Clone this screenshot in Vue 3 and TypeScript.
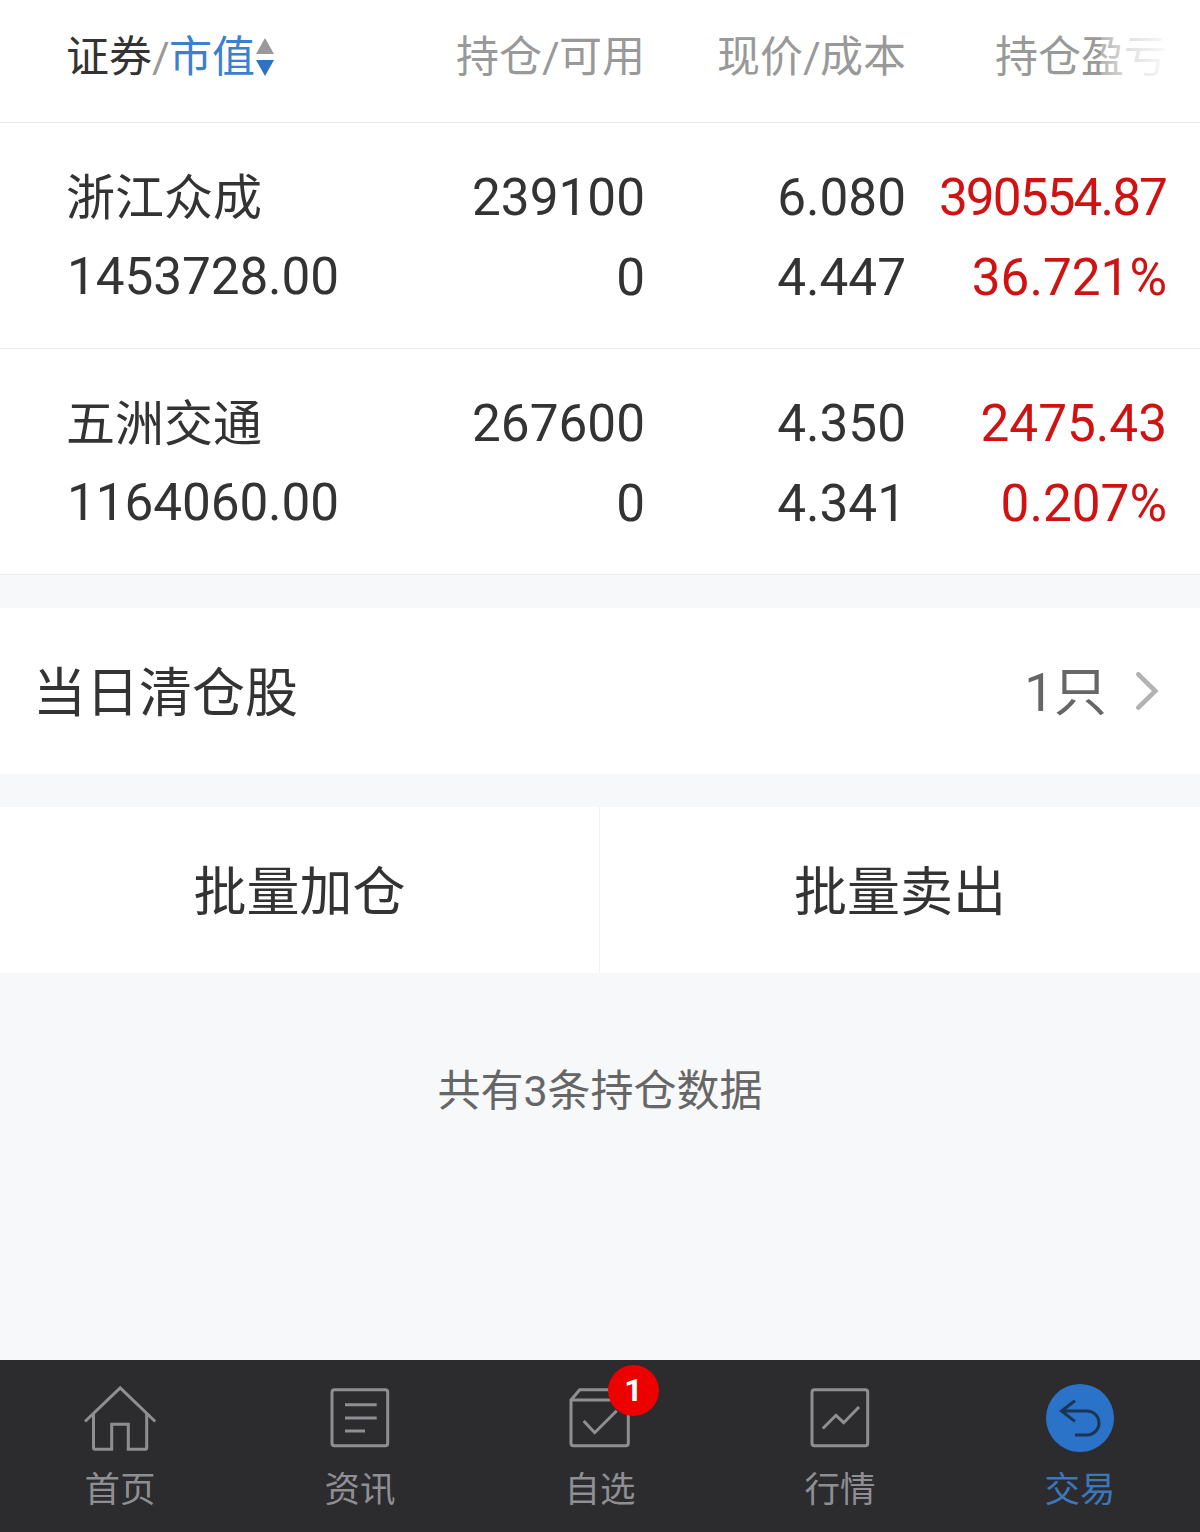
<script setup lang="ts">
interface Holding {
  name: string
  value: string
  amount: string
  available: string
  price: string
  cost: string
  profit: string
  rate: string
}

const holdings: Holding[] = [
  { name: '浙江众成', value: '1453728.00', amount: '239100', available: '0', price: '6.080', cost: '4.447', profit: '390554.87', rate: '36.721%' },
  { name: '五洲交通', value: '1164060.00', amount: '267600', available: '0', price: '4.350', cost: '4.341', profit: '2475.43', rate: '0.207%' },
]

interface Tab {
  id: string
  label: string
  badge?: number
}

const activeTab = 'trade'
const tabs: Tab[] = [
  { id: 'home', label: '首页' },
  { id: 'news', label: '资讯' },
  { id: 'watch', label: '自选', badge: 1 },
  { id: 'market', label: '行情' },
  { id: 'trade', label: '交易' },
]
</script>

<template>
  <div class="page">
    <header class="row head">
      <div class="sort">
        <span class="dark">证券</span><span class="slash">/</span><span class="blue">市值</span>
        <svg class="sorter" width="18" height="38" viewBox="0 0 18 38">
          <path d="M9 0L18 16H0Z" fill="#999" />
          <path d="M0 22H18L9 38Z" fill="#2f72c4" />
        </svg>
      </div>
      <div class="right">持仓<span class="slash">/</span>可用</div>
      <div class="right">现价<span class="slash">/</span>成本</div>
      <div class="right last">持仓盈亏<i class="fade"></i></div>
    </header>

    <section v-for="h in holdings" :key="h.name" class="row holding">
      <div class="cell">
        <span class="name">{{ h.name }}</span>
        <span class="num value">{{ h.value }}</span>
      </div>
      <div class="cell right">
        <span class="num">{{ h.amount }}</span>
        <span class="num">{{ h.available }}</span>
      </div>
      <div class="cell right">
        <span class="num">{{ h.price }}</span>
        <span class="num">{{ h.cost }}</span>
      </div>
      <div class="cell right red">
        <span class="num" :class="{ tight: h.profit.length > 8 }">{{ h.profit }}</span>
        <span class="num">{{ h.rate }}</span>
      </div>
    </section>

    <section class="cleared">
      <span class="cleared-title">当日清仓股</span>
      <span class="count">1只</span>
      <svg class="chevron" width="24" height="40" viewBox="0 0 24 40">
        <path d="M3.3 3.3L20.3 20L3.3 36.7" fill="none" stroke="#b2b2b2" stroke-width="4.6" stroke-linecap="round" />
      </svg>
    </section>

    <section class="actions">
      <button class="action">批量加仓</button>
      <button class="action">批量卖出</button>
    </section>

    <p class="summary">共有3条持仓数据</p>

    <nav class="tabs">
      <a v-for="t in tabs" :key="t.id" class="tab" :class="{ active: t.id === activeTab }">
        <svg class="icon" width="72" height="72" viewBox="0 0 72 72" fill="none" stroke="currentColor" stroke-width="3">
          <template v-if="t.id === 'home'">
            <path d="M1 39.5L36.2 5.8L71.2 39.5" />
            <path d="M9.5 31.5V65.8Q9.5 67.3 11 67.3H27.7V42.3H44.3V67.3H61.2Q62.7 67.3 62.7 65.8V31.5" />
          </template>
          <template v-else-if="t.id === 'news'">
            <rect x="8" y="7.7" width="55.7" height="56" rx="2.5" />
            <path d="M21 22.7H52.7M21 36H52.7M21 49H41" />
          </template>
          <template v-else-if="t.id === 'watch'">
            <path d="M7 18L15.7 7.7H56L64.3 18V61.2Q64.3 63.7 61.8 63.7H9.5Q7 63.7 7 61.2ZM7 18H64.3" />
            <path d="M19.7 39L30.7 50.7L52.7 28.7" />
          </template>
          <template v-else-if="t.id === 'market'">
            <rect x="8" y="7.7" width="55.7" height="56" rx="2.5" />
            <path d="M18.8 46.5L32 33.3L39.7 40.7L55 25" />
          </template>
          <template v-else>
            <circle cx="36" cy="36" r="34" fill="#2b73c8" stroke="none" />
            <path d="M30.9 18.7L17.5 29L30.9 39.4M17.5 29H43.1A11.9 11.9 0 0 1 43.1 52.9H31" stroke="#1c3553" />
          </template>
        </svg>
        <span class="label">{{ t.label }}</span>
        <b v-if="t.badge" class="badge">{{ t.badge }}</b>
      </a>
    </nav>
  </div>
</template>

<style>
body {
  margin: 0;
  background: #f6f8fb;
}
</style>

<style scoped>
.page {
  display: flex;
  flex-direction: column;
  width: 1200px;
  height: 1532px;
  overflow: hidden;
  background: #f6f8fa;
  color: #333;
  font-family: Roboto, 'Noto Sans CJK SC', sans-serif;
  white-space: nowrap;
}

.row {
  display: grid;
  grid-template-columns: 318px 261px 261px 261px;
  box-sizing: border-box;
  padding-left: 66px;
  background: #fff;
  border-bottom: 1px solid #ebebeb;
}

.head {
  height: 123px;
  padding-top: 27px;
  font-size: 43px;
  line-height: 60px;
  color: #999;
}

.sort {
  display: flex;
}

.dark {
  color: #333;
}

.blue {
  color: #3b7fd0;
}

.slash {
  display: inline-block;
  width: 17px;
  text-align: center;
  color: #999;
}

.sorter {
  margin: 11px 0 0 1px;
}

.right {
  text-align: right;
}

.last {
  position: relative;
}

.fade {
  position: absolute;
  top: 0;
  right: -33px;
  width: 99px;
  height: 60px;
  background: linear-gradient(90deg, rgba(255, 255, 255, 0.25), rgba(255, 255, 255, 0.72) 30%, #fff 78%);
}

.holding {
  height: 226px;
  padding-top: 34px;
}

.cell {
  display: flex;
  flex-direction: column;
}

.name {
  height: 80px;
  font-size: 49px;
  line-height: 84px;
}

.num {
  height: 80px;
  font-size: 51.3px;
  line-height: 81px;
}

.value {
  height: 79px;
  padding-left: 1px;
  line-height: 79px;
  letter-spacing: -0.1px;
}

.red {
  color: #d01212;
}

.tight {
  letter-spacing: -1.9px;
  padding-right: 1px;
}

.cleared {
  display: flex;
  align-items: center;
  height: 166px;
  margin-top: 33px;
  padding: 0 41px 0 33px;
  background: #fff;
  font-size: 53px;
  line-height: 80px;
}

.cleared-title {
  flex: 1;
  padding-top: 5px;
}

.count {
  padding-top: 3px;
  color: #666;
}

.chevron {
  margin-left: 28px;
}

.actions {
  display: flex;
  height: 166px;
  margin-top: 33px;
  background: #fff;
}

.action {
  box-sizing: border-box;
  width: 600px;
  padding: 5px 0 0;
  border: 0;
  background: none;
  color: #333;
  font: inherit;
  font-size: 53px;
  line-height: 80px;
}

.action:first-child {
  border-right: 1px solid #f1f1f1;
}

.summary {
  flex: 1;
  margin: 0;
  padding-top: 88px;
  font-size: 43px;
  line-height: 60px;
  text-align: center;
  color: #666;
}

.tabs {
  display: flex;
  height: 172px;
  background: #2c2c2e;
}

.tab {
  position: relative;
  flex: 1;
  display: flex;
  flex-direction: column;
  align-items: center;
  padding-top: 22px;
  color: #8e8e93;
}

.icon {
  display: block;
}

.label {
  margin-top: 11px;
  font-size: 35.5px;
  line-height: 50px;
}

.active .label {
  color: #3c76bb;
}

.badge {
  position: absolute;
  top: 5px;
  left: 128px;
  width: 51px;
  height: 51px;
  border-radius: 50%;
  background: #ec0000;
  color: #fff;
  font-size: 32px;
  line-height: 51px;
  text-align: center;
}
</style>
